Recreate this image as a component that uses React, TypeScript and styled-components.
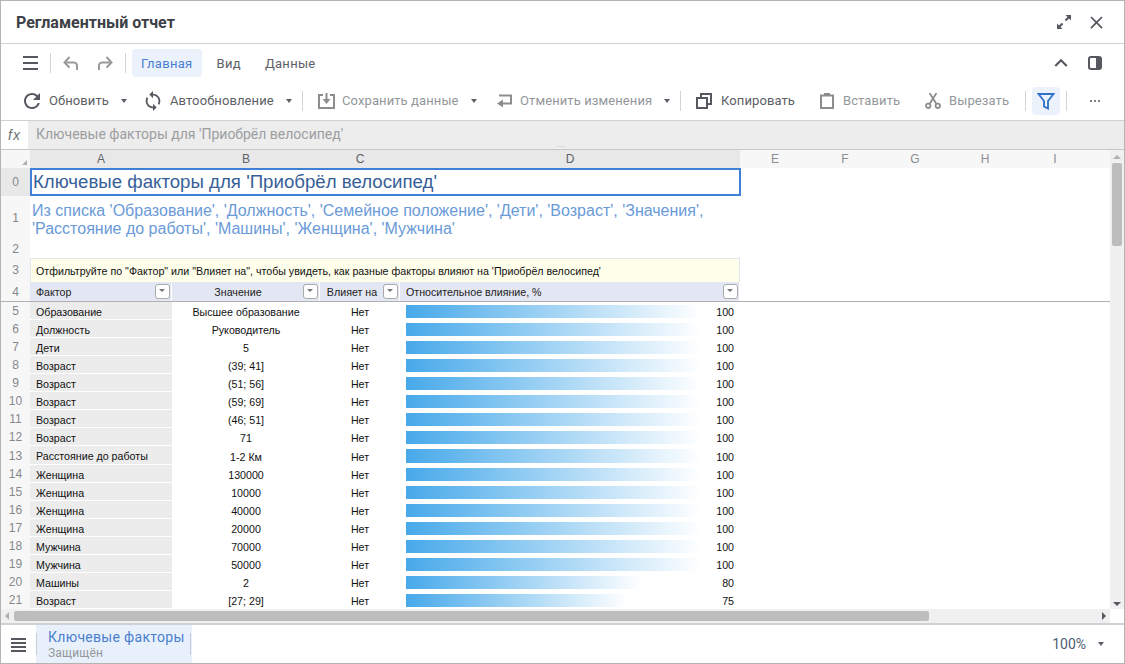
import React from "react";
import styled, { createGlobalStyle } from "styled-components";
import { MdClose, MdExpandLess, MdRefresh, MdSync } from "react-icons/md";

const uiFont = `Roboto, "Noto Sans", sans-serif`;
const cellFont = `"Liberation Sans", Arial, sans-serif`;

const factors = [
  { row: 5, name: "Образование", value: "Высшее образование", pct: 100 },
  { row: 6, name: "Должность", value: "Руководитель", pct: 100 },
  { row: 7, name: "Дети", value: "5", pct: 100 },
  { row: 8, name: "Возраст", value: "(39; 41]", pct: 100 },
  { row: 9, name: "Возраст", value: "(51; 56]", pct: 100 },
  { row: 10, name: "Возраст", value: "(59; 69]", pct: 100 },
  { row: 11, name: "Возраст", value: "(46; 51]", pct: 100 },
  { row: 12, name: "Возраст", value: "71", pct: 100 },
  { row: 13, name: "Расстояние до работы", value: "1-2 Км", pct: 100, tall: true },
  { row: 14, name: "Женщина", value: "130000", pct: 100 },
  { row: 15, name: "Женщина", value: "10000", pct: 100 },
  { row: 16, name: "Женщина", value: "40000", pct: 100 },
  { row: 17, name: "Женщина", value: "20000", pct: 100 },
  { row: 18, name: "Мужчина", value: "70000", pct: 100 },
  { row: 19, name: "Мужчина", value: "50000", pct: 100 },
  { row: 20, name: "Машины", value: "2", pct: 80 },
  { row: 21, name: "Возраст", value: "[27; 29]", pct: 75 },
];

const Hamburger = ({ lines, gap }: { lines: number; gap: number }) => (
  <svg width="15" height={(lines - 1) * gap + 2} fill="#55585e">
    {Array.from({ length: lines }, (_, i) => (
      <rect key={i} y={i * gap} width="15" height="2" />
    ))}
  </svg>
);

const App = () => {
  return (
    <Window>
      <GlobalStyle />
      <TitleBar>
        <Title>Регламентный отчет</Title>
        <TitleActions>
          <svg width="16" height="16" viewBox="0 0 16 16" fill="#55585e">
            <path d="M9.5 1H15v5.500l-2-2-2.800 2.800-1.500-1.500L11.500 3zM6.500 15H1V9.500l2 2 2.800-2.800 1.500 1.500L4.500 13z" />
          </svg>
          <MdClose size={21} color="#55585e" />
        </TitleActions>
      </TitleBar>

      <MenuRow>
        <MenuIcon $width={39}><Hamburger lines={3} gap={6} /></MenuIcon>
        <Separator />
        <MenuIcon $width={38}>
          <svg width="15" height="14" viewBox="0 0 15 14" fill="none" stroke="#9a9a9a" strokeWidth="2">
            <path d="M14 14V9.500a3 3 0 0 0-3-3H2" />
            <path d="M6.500 1L1.500 6.500l5 5" />
          </svg>
        </MenuIcon>
        <MenuIcon $width={32}>
          <svg width="15" height="14" viewBox="0 0 15 14" fill="none" stroke="#9a9a9a" strokeWidth="2">
            <path d="M1 14V9.500a3 3 0 0 1 3-3h9" />
            <path d="M8.500 1l5 5.500-5 5" />
          </svg>
        </MenuIcon>
        <Separator $left={4} />
        <MenuTab $active>Главная</MenuTab>
        <MenuTab>Вид</MenuTab>
        <MenuTab>Данные</MenuTab>
        <MenuRight>
          <MdExpandLess size={26} color="#55585e" />
          <svg width="14" height="14" viewBox="0 0 14 14">
            <rect x="1" y="1" width="12" height="12" rx="2" fill="none" stroke="#55585e" strokeWidth="2" />
            <rect x="8" y="1" width="5" height="12" fill="#55585e" />
          </svg>
        </MenuRight>
      </MenuRow>

      <Toolbar>
        <ToolButton $width={121}><ToolIcon><MdRefresh size={24} color="#55585e" /></ToolIcon>Обновить<Caret /></ToolButton>
        <ToolButton $width={161}><ToolIcon><MdSync size={22} color="#55585e" /></ToolIcon>Автообновление<Caret /></ToolButton>
        <ToolSeparator />
        <ToolButton $width={178} $disabled>
          <ToolIcon>
            <svg width="17" height="16" viewBox="0 0 17 16" fill="none" stroke="#8d8d8d" strokeWidth="2">
              <path d="M5 2H1v13h15V2h-4" />
              <path d="M8.500 0v7" />
              <path d="M4.500 6h8l-4 5z" fill="#8d8d8d" stroke="none" />
            </svg>
          </ToolIcon>
          Сохранить данные<Caret />
        </ToolButton>
        <ToolButton $width={188} $disabled>
          <ToolIcon>
            <svg width="15" height="14" viewBox="0 0 15 14" fill="none" stroke="#8d8d8d" strokeWidth="2">
              <path d="M2 1.500h12v8H5" />
              <path d="M6 5.500L0 9.500l6 4z" fill="#8d8d8d" stroke="none" />
            </svg>
          </ToolIcon>
          Отменить изменения<Caret />
        </ToolButton>
        <ToolSeparator />
        <ToolButton $width={123}>
          <ToolIcon>
            <svg width="16" height="16" viewBox="0 0 16 16" fill="none" stroke="#55585e" strokeWidth="2">
              <rect x="1" y="5" width="10" height="10" />
              <path d="M5 4V1h10v10h-3" />
            </svg>
          </ToolIcon>
          Копировать
        </ToolButton>
        <ToolButton $width={106} $disabled>
          <ToolIcon>
            <svg width="14" height="16" viewBox="0 0 14 16" fill="none" stroke="#8d8d8d" strokeWidth="2">
              <rect x="1" y="2.500" width="12" height="12.500" />
              <path d="M4 1.500h6" strokeWidth="3" />
            </svg>
          </ToolIcon>
          Вставить
        </ToolButton>
        <ToolButton $width={104} $disabled>
          <ToolIcon>
            <svg width="16" height="16" viewBox="0 0 16 16" fill="none" stroke="#8d8d8d" strokeWidth="1.800">
              <circle cx="3.200" cy="12.800" r="2.200" />
              <circle cx="12.800" cy="12.800" r="2.200" />
              <path d="M4.500 11L11.500 0M11.500 11L4.500 0" />
            </svg>
          </ToolIcon>
          Вырезать
        </ToolButton>
        <ToolSeparator />
        <FilterButton>
          <svg width="18" height="18" viewBox="0 0 18 18" fill="none" stroke="#2f70c9" strokeWidth="1.800">
            <path d="M1.500 2h15L11 9v7.500l-4-2V9z" />
          </svg>
        </FilterButton>
        <ToolSeparator />
        <Dots>
          <i /><i /><i />
        </Dots>
      </Toolbar>

      <FormulaBar>
        <FxLabel>fx</FxLabel>
        <FormulaText>Ключевые факторы для 'Приобрёл велосипед'</FormulaText>
        <Grip>...</Grip>
      </FormulaBar>

      <SheetArea>
        <Sheet>
          <HeaderRow>
            <Corner />
            <ColumnHead $active>A</ColumnHead>
            <ColumnHead $active>B</ColumnHead>
            <ColumnHead $active>C</ColumnHead>
            <ColumnHead $active>D</ColumnHead>
            <ColumnHead>E</ColumnHead>
            <ColumnHead>F</ColumnHead>
            <ColumnHead>G</ColumnHead>
            <ColumnHead>H</ColumnHead>
            <ColumnHead>I</ColumnHead>
            <ColumnHead />
          </HeaderRow>

          <Row $height={28}>
            <RowHead $active>0</RowHead>
            <TitleCell>Ключевые факторы для 'Приобрёл велосипед'</TitleCell>
          </Row>
          <Row $height={44}>
            <RowHead>1</RowHead>
            <SubtitleCell>
              Из списка 'Образование', 'Должность', 'Семейное положение', 'Дети', 'Возраст', 'Значения',
              'Расстояние до работы', 'Машины', 'Женщина', 'Мужчина'
            </SubtitleCell>
          </Row>
          <Row $height={18}>
            <RowHead>2</RowHead>
          </Row>
          <Row $height={24}>
            <RowHead>3</RowHead>
            <HintCell>Отфильтруйте по "Фактор" или "Влияет на", чтобы увидеть, как разные факторы влияют на 'Приобрёл велосипед'</HintCell>
          </Row>
          <FrozenRow>
            <RowHead>4</RowHead>
            <TableHead><HeadLabel>Фактор</HeadLabel><FilterToggle /></TableHead>
            <TableHead><HeadLabel $center>Значение</HeadLabel><FilterToggle /></TableHead>
            <TableHead><HeadLabel $center>Влияет на</HeadLabel><FilterToggle /></TableHead>
            <TableHead><HeadLabel>Относительное влияние, %</HeadLabel><FilterToggle /></TableHead>
          </FrozenRow>

          <Rows>
            {factors.map((f) => (
              <Row key={f.row} $height={f.tall ? 19 : 18}>
                <RowHead>{f.row}</RowHead>
                <FactorCell>{f.name}</FactorCell>
                <CenterCell>{f.value}</CenterCell>
                <CenterCell>Нет</CenterCell>
                <BarCell>
                  <Bar style={{ width: `${(f.pct / 100) * 328}px` }} />
                  <BarValue>{f.pct}</BarValue>
                </BarCell>
              </Row>
            ))}
          </Rows>
        </Sheet>

        <VScroll>
          <ArrowUp />
          <VThumb />
          <VSpacer />
          <ArrowDown />
        </VScroll>
      </SheetArea>

      <HScroll>
        <ArrowLeft />
        <HThumb />
        <ArrowRight />
      </HScroll>

      <Footer>
        <FooterMenu><Hamburger lines={4} gap={4} /></FooterMenu>
        <SheetTab>
          <SheetName>Ключевые факторы</SheetName>
          <SheetState>Защищён</SheetState>
        </SheetTab>
        <Zoom>100%<Caret /></Zoom>
      </Footer>
    </Window>
  );
};

const GlobalStyle = createGlobalStyle`
  html, body {
    margin: 0;
    padding: 0;
    background: #fff;
  }
  * {
    box-sizing: border-box;
  }
`;

const Window = styled.div`
  width: 1125px;
  height: 664px;
  display: flex;
  flex-direction: column;
  border: 1px solid #b4b4b4;
  background: #fff;
  overflow: hidden;
  font-family: ${uiFont};
`;

const TitleBar = styled.div`
  height: 43px;
  flex: none;
  display: flex;
  align-items: center;
  justify-content: space-between;
  padding: 0 17px 0 15px;
  border-bottom: 1px solid #d0d0d0;
`;

const Title = styled.div`
  font-size: 16px;
  font-weight: 700;
  color: #3c4046;
`;

const TitleActions = styled.div`
  display: flex;
  align-items: center;
  gap: 14px;
`;

const MenuRow = styled.div`
  height: 38px;
  flex: none;
  display: flex;
  align-items: center;
  padding: 0 22px 0 10px;
`;

const MenuIcon = styled.div<{ $width: number }>`
  width: ${(p) => p.$width}px;
  display: flex;
  justify-content: center;
`;

const Separator = styled.div<{ $left?: number }>`
  width: 1px;
  height: 20px;
  margin-left: ${(p) => p.$left ?? 0}px;
  background: #d4d4d4;
`;

const MenuTab = styled.div<{ $active?: boolean }>`
  height: 28px;
  margin-left: ${(p) => (p.$active ? "6px" : "0")};
  margin-right: ${(p) => (p.$active ? "7px" : "8px")};
  padding: 0 ${(p) => (p.$active ? "9px" : "8px")};
  display: flex;
  align-items: center;
  border-radius: 4px;
  font-size: 13px;
  letter-spacing: 0.3px;
  color: ${(p) => (p.$active ? "#4a7fcf" : "#5c6066")};
  background: ${(p) => (p.$active ? "#ebf2fb" : "transparent")};
`;

const MenuRight = styled.div`
  margin-left: auto;
  display: flex;
  align-items: center;
  gap: 14px;
`;

const Toolbar = styled.div`
  height: 39px;
  flex: none;
  display: flex;
  align-items: center;
  padding: 0 0 1px 19px;
  border-bottom: 1px solid #d0d0d0;
`;

const ToolIcon = styled.span`
  width: 24px;
  margin-right: 5px;
  display: flex;
  justify-content: center;
  flex: none;
`;

const ToolButton = styled.div<{ $width: number; $disabled?: boolean }>`
  width: ${(p) => p.$width}px;
  flex: none;
  display: flex;
  align-items: center;
  font-size: 13px;
  letter-spacing: 0.1px;
  white-space: nowrap;
  color: ${(p) => (p.$disabled ? "#94979b" : "#5c6066")};

  ${ToolIcon} {
    margin-right: ${(p) => (p.$disabled ? "4px" : "5px")};
  }
`;

const Caret = styled.span`
  width: 0;
  height: 0;
  margin-left: 12px;
  border-left: 3.5px solid transparent;
  border-right: 3.5px solid transparent;
  border-top: 4px solid #5c6066;
`;

const ToolSeparator = styled.div`
  width: 1px;
  height: 20px;
  flex: none;
  margin-right: 11px;
  background: #d4d4d4;
`;

const FilterButton = styled.div`
  width: 28px;
  height: 28px;
  flex: none;
  margin: 0 6px -1px -5px;
  display: flex;
  align-items: center;
  justify-content: center;
  border-radius: 4px;
  background: #ebf2fb;
`;

const Dots = styled.div`
  margin-left: 12px;
  display: flex;
  gap: 2px;

  i {
    width: 2px;
    height: 2px;
    border-radius: 50%;
    background: #55585e;
  }
`;

const FormulaBar = styled.div`
  height: 29px;
  flex: none;
  position: relative;
  display: flex;
  align-items: center;
  background: #ededed;
  border-bottom: 1px solid #c8c8c8;
`;

const FxLabel = styled.div`
  width: 27px;
  height: 100%;
  display: flex;
  align-items: center;
  justify-content: center;
  background: #fff;
  font-family: ${cellFont};
  font-size: 14px;
  font-style: italic;
  letter-spacing: 1px;
  color: #6c6f74;
`;

const FormulaText = styled.div`
  padding: 0 0 2px 8px;
  font-size: 14px;
  color: #9c9ea1;
`;

const Grip = styled.div`
  position: absolute;
  left: 556px;
  bottom: 1px;
  font-size: 10px;
  line-height: 8px;
  letter-spacing: 0.5px;
  color: #bdbdbd;
`;

const SheetArea = styled.div`
  flex: 1;
  min-height: 0;
  display: flex;
  overflow: hidden;
`;

const Sheet = styled.div`
  width: 1109px;
  flex: none;
  display: flex;
  flex-direction: column;
  font-family: ${cellFont};
`;

const HeaderRow = styled.div`
  height: 18px;
  flex: none;
  display: grid;
  grid-template-columns: 29px 142px 148px 80px 340px 70px 70px 70px 70px 70px 20px;
`;

const Corner = styled.div`
  background: #f7f7f7;
  position: relative;

  &::after {
    content: "";
    position: absolute;
    right: 3px;
    bottom: 3px;
    border-left: 5px solid transparent;
    border-bottom: 5px solid #b0b0b0;
  }
`;

const ColumnHead = styled.div<{ $active?: boolean }>`
  display: flex;
  align-items: center;
  justify-content: center;
  font-size: 12px;
  color: ${(p) => (p.$active ? "#5f6368" : "#8a8d91")};
  background: ${(p) => (p.$active ? "#e8e8e8" : "#f7f7f7")};
`;

const Row = styled.div<{ $height: number }>`
  height: ${(p) => p.$height}px;
  flex: none;
  display: grid;
  grid-template-columns: 29px 142px 148px 80px 340px 1fr;
`;

const FrozenRow = styled(Row).attrs({ $height: 20 })`
  border-bottom: 1px solid #b0b0b0;
`;

const Rows = styled.div`
  flex: 1;
  min-height: 0;
  display: flex;
  flex-direction: column;
  overflow: hidden;
`;

const RowHead = styled.div<{ $active?: boolean }>`
  display: flex;
  align-items: center;
  justify-content: center;
  font-size: 12px;
  color: #85888c;
  background: ${(p) => (p.$active ? "#e8e8e8" : "#f7f7f7")};
`;

const TitleCell = styled.div`
  grid-column: 2 / span 4;
  display: flex;
  align-items: center;
  padding-left: 1px;
  border: 2px solid #3f7fd6;
  margin-right: -1px;
  font-size: 18.67px;
  white-space: nowrap;
  color: #376098;
`;

const SubtitleCell = styled.div`
  grid-column: 2 / span 4;
  padding: 6px 8px 0 2px;
  font-size: 16px;
  line-height: 18px;
  color: #6a9ad8;
`;

const HintCell = styled.div`
  grid-column: 2 / span 4;
  display: flex;
  align-items: center;
  padding: 1px 0 0 5px;
  border: 1px solid #e2e6ee;
  border-bottom: 0;
  background: #fefeea;
  font-size: 10.67px;
  white-space: nowrap;
  color: #111;
`;

const TableHead = styled.div`
  display: flex;
  align-items: center;
  padding: 0 1px;
  border-right: 1px solid #fff;
  background: #e3e6f3;
  font-size: 10.67px;
  color: #222;
`;

const HeadLabel = styled.span<{ $center?: boolean }>`
  flex: 1;
  padding-left: ${(p) => (p.$center ? "0" : "5px")};
  text-align: ${(p) => (p.$center ? "center" : "left")};
  white-space: nowrap;
`;

const FilterToggle = styled.span`
  width: 15px;
  height: 15px;
  flex: none;
  position: relative;
  border: 1px solid #ababab;
  border-radius: 3px;
  background: #fff;

  &::after {
    content: "";
    position: absolute;
    left: 3px;
    top: 4px;
    border-left: 3.5px solid transparent;
    border-right: 3.5px solid transparent;
    border-top: 3.5px solid #777;
  }
`;

const FactorCell = styled.div`
  display: flex;
  align-items: center;
  padding: 2px 0 0 6px;
  border-bottom: 1px solid #fff;
  background: #ececec;
  font-size: 10.67px;
  color: #111;
`;

const CenterCell = styled.div`
  display: flex;
  align-items: center;
  justify-content: center;
  padding-top: 2px;
  font-size: 10.67px;
  color: #111;
`;

const BarCell = styled.div`
  position: relative;
  display: flex;
  align-items: center;
  justify-content: flex-end;
  padding: 2px 6px 0 0;
  font-size: 10.67px;
  color: #111;
`;

const Bar = styled.div`
  position: absolute;
  left: 6px;
  top: 3px;
  bottom: 2px;
  background: linear-gradient(90deg, #47a9ea, #fff 90%);
`;

const BarValue = styled.span`
  position: relative;
`;

const VScroll = styled.div`
  flex: 1;
  display: flex;
  flex-direction: column;
  align-items: center;
  background: #f0f0f0;
`;

const ArrowUp = styled.span`
  margin: 5px 0 4px;
  border-left: 4px solid transparent;
  border-right: 4px solid transparent;
  border-bottom: 4px solid #b0b0b0;
`;

const VThumb = styled.div`
  width: 10px;
  height: 83px;
  border-radius: 2px;
  background: #bdbdbd;
`;

const VSpacer = styled.div`
  flex: 1;
`;

const ArrowDown = styled.span`
  margin-bottom: 3px;
  border-left: 4px solid transparent;
  border-right: 4px solid transparent;
  border-top: 4px solid #55585e;
`;

const HScroll = styled.div`
  height: 14px;
  flex: none;
  display: flex;
  align-items: center;
  width: 1109px;
  padding: 0 4px;
  background: #f0f0f0;
`;

const ArrowLeft = styled.span`
  margin-right: 5px;
  border-top: 4px solid transparent;
  border-bottom: 4px solid transparent;
  border-right: 4px solid #b0b0b0;
`;

const HThumb = styled.div`
  width: 915px;
  height: 10px;
  border-radius: 2px;
  background: #bdbdbd;
`;

const ArrowRight = styled.span`
  margin-left: auto;
  border-top: 4px solid transparent;
  border-bottom: 4px solid transparent;
  border-left: 4px solid #55585e;
`;

const Footer = styled.div`
  flex: none;
  height: 40px;
  display: flex;
  align-items: stretch;
  border-top: 2px solid #d0d0d8;
`;

const FooterMenu = styled.div`
  width: 35px;
  padding-top: 2px;
  display: flex;
  align-items: center;
  justify-content: center;
`;

const SheetTab = styled.div`
  width: 156px;
  position: relative;
  padding: 3px 12px 0;
  white-space: nowrap;
  background: #e8f0fb;

  &::before,
  &::after {
    content: "";
    position: absolute;
    top: 8px;
    bottom: 8px;
    width: 1px;
    background: #c8ccd4;
  }
  &::before {
    left: 0;
  }
  &::after {
    right: 1px;
  }
`;

const SheetName = styled.div`
  font-size: 14px;
  line-height: 18px;
  letter-spacing: 0.3px;
  color: #4a7fcf;
`;

const SheetState = styled.div`
  font-size: 12px;
  line-height: 15px;
  letter-spacing: 0.2px;
  color: #94979b;
`;

const Zoom = styled.div`
  margin-left: auto;
  padding-right: 20px;
  display: flex;
  align-items: center;
  font-size: 14px;
  color: #4f5d75;
`;

export default App;
